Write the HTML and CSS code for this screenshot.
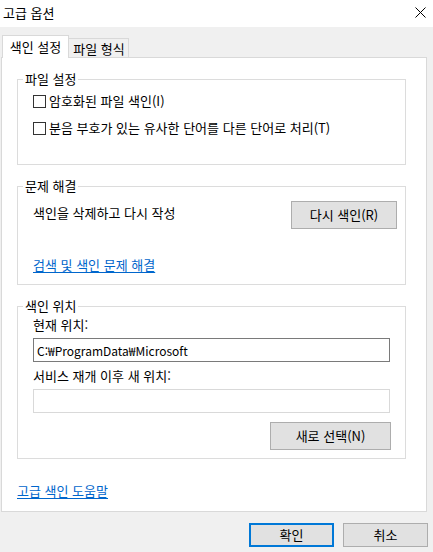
FILE: index.html
```html
<!DOCTYPE html>
<html lang="ko">
<head>
<meta charset="utf-8">
<title>고급 옵션</title>
<link rel="stylesheet" href="styles.css">
</head>
<body>
<div class="dialog">
  <div class="titlebar">
    <span class="title">고급 옵션</span>
    <svg class="close" width="11" height="11" viewBox="0 0 11 11"><path d="M0.5 0.5 L10.5 10.5 M10.5 0.5 L0.5 10.5" stroke="#000" stroke-width="1" fill="none"/></svg>
  </div>
  <div class="tabs">
    <div class="tab active">색인 설정</div>
    <div class="tab">파일 형식</div>
  </div>
  <div class="panel">
    <fieldset class="group g1">
      <legend>파일 설정</legend>
      <label class="check first"><input type="checkbox" class="cb"><span>암호화된 파일 색인(I)</span></label>
      <label class="check"><input type="checkbox" class="cb"><span>분음 부호가 있는 유사한 단어를 다른 단어로 처리(T)</span></label>
    </fieldset>
    <fieldset class="group g2">
      <legend>문제 해결</legend>
      <div class="row">
        <span class="rowtext">색인을 삭제하고 다시 작성</span>
        <button class="btn reindex">다시 색인(R)</button>
      </div>
      <a class="link trouble" href="#">검색 및 색인 문제 해결</a>
    </fieldset>
    <fieldset class="group g3">
      <legend>색인 위치</legend>
      <div class="label first">현재 위치:</div>
      <input class="field" type="text" value="C:₩ProgramData₩Microsoft">
      <div class="label">서비스 재개 이후 새 위치:</div>
      <input class="field disabled" type="text" value="" disabled>
      <div class="selrow"><button class="btn select">새로 선택(N)</button></div>
    </fieldset>
    <a class="link help" href="#">고급 색인 도움말</a>
  </div>
  <div class="actions">
    <button class="btn dlg default">확인</button>
    <button class="btn dlg">취소</button>
  </div>
</div>
</body>
</html>
```

FILE: styles.css
```css
* { box-sizing: border-box; }
html, body {
  margin: 0;
  padding: 0;
  background: #f0f0f0;
}
body {
  font-family: "Noto Sans CJK KR", "Noto Sans", sans-serif;
  font-size: 13px;
  line-height: 16px;
  color: #000;
  width: 433px;
  height: 552px;
  overflow: hidden;
}
.titlebar {
  height: 27px;
  background: #fff;
  display: flex;
  align-items: center;
  justify-content: space-between;
  padding: 0 7px 2px 3px;
}
.close { display: block; }
.tabs {
  display: flex;
  align-items: flex-end;
  margin-top: 8px;
  padding-left: 2px;
}
.tab {
  height: 19px;
  width: 60px;
  border: 1px solid #d9d9d9;
  border-bottom: none;
  border-left: none;
  background: #f0f0f0;
  text-align: center;
  line-height: 19px;
  padding-left: 1px;
}
.tab.active {
  height: 23px;
  width: 67px;
  border-left: 1px solid #d9d9d9;
  background: #fff;
  margin-bottom: -1px;
  position: relative;
  z-index: 1;
  line-height: 21px;
  padding-left: 0;
}
.panel {
  margin-left: 1px;
  width: 426px;
  height: 455px;
  background: #fff;
  border: 1px solid #d9d9d9;
  padding-top: 13px;
}
.group {
  margin: 0 0 13px 15px;
  width: 389px;
  border: 1px solid #dcdcdc;
  padding: 0 8px 0 15px;
  min-width: 0;
}
.group legend {
  margin-left: -10px;
  padding: 0 2px;
  line-height: 16px;
}
.g1 { padding-bottom: 28px; }
.check {
  display: flex;
  align-items: center;
  height: 16px;
  margin-top: 11px;
}
.check.first { margin-top: 6px; }
.cb {
  -webkit-appearance: none;
  appearance: none;
  width: 13px;
  height: 13px;
  margin: 0 3px 0 0;
  border: 1px solid #333;
  background: #fff;
  flex: none;
}
.row {
  display: flex;
  justify-content: space-between;
  align-items: flex-start;
  margin-top: 7px;
}
.rowtext { margin-top: 4px; }
.btn {
  font-family: inherit;
  font-size: 13px;
  line-height: 16px;
  color: #000;
  background: #e1e1e1;
  border: 1px solid #adadad;
  border-radius: 0;
  padding: 0;
  margin: 0;
}
.reindex { width: 106px; height: 28px; }
.link {
  color: #0066cc;
  text-decoration: underline;
  text-underline-offset: 2px;
}
.trouble {
  display: block;
  width: fit-content;
  margin-top: 28px;
  margin-bottom: 11px;
}
.g3 { padding-right: 14px; padding-bottom: 8px; margin-bottom: 0; }
.label { margin-top: 6px; }
.label.first { margin-top: 3px; }
.field {
  display: block;
  width: 357px;
  height: 24px;
  margin-top: 5px;
  border: 1px solid #7a7a7a;
  background: #fff;
  font-family: inherit;
  font-size: 12px;
  color: #000;
  padding: 0 3px;
  outline: none;
}
.field.disabled { border-color: #d9d9d9; }
.selrow {
  display: flex;
  justify-content: flex-end;
  margin-top: 9px;
}
.select { width: 121px; height: 28px; }
.help {
  display: block;
  width: fit-content;
  margin: 24px 0 0 15px;
}
.actions {
  display: flex;
  justify-content: flex-end;
  gap: 9px;
  margin-top: 11px;
  padding-right: 5px;
}
.dlg { width: 85px; height: 24px; }
.dlg.default { border: 2px solid #0078d7; }
```
